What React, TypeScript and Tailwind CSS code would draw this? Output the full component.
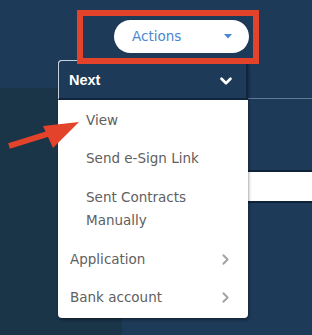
import { ChevronDown, ChevronRight } from "lucide-react";

const subItems = ["View", "Send e-Sign Link"];

export default function App() {
    return (
        <div className="relative h-[335px] w-[312px] overflow-hidden bg-[#1d3a59] font-['DejaVu_Sans',sans-serif]">
            <header className="flex h-[88px] justify-end pr-[63px] pt-[20px]">
                <button className="flex h-[33px] w-[135px] items-center justify-between rounded-full bg-white pl-[18px] pr-[17px] text-[13.5px] text-[#4a86d1]">
                    <span>Actions</span>
                    <svg width="8" height="5" viewBox="0 0 8 5">
                        <path d="M0 0 L8 0 L4 4.5 Z" fill="#4a86d1" />
                    </svg>
                </button>
            </header>

            <div className="flex h-[247px]">
                <aside className="w-[122px] bg-[#1a3448]" />
                <main className="flex-1 pt-[10px]">
                    <div className="h-px bg-[#5f7a95]" />
                    <div className="h-[71px]" />
                    <div className="h-[2px] bg-[#0e2239]" />
                    <div className="h-[29px] bg-white" />
                    <div className="h-[2px] bg-[#0e2239]" />
                </main>
            </div>

            {/* dropdown */}
            <div className="absolute left-[58px] top-[60px] w-[190px] overflow-hidden rounded-[4px] bg-white pb-[2px] shadow-[1px_2px_3px_rgba(0,0,0,0.35)]">
                <div className="flex h-[40px] items-center justify-between rounded-t-[4px] border-l border-t border-b-2 border-r-2 border-l-[#c9d1da] border-t-[#c9d1da] border-b-[#0f243d] border-r-[#0f243d] bg-[#1d3a59] pl-[10px] pr-[11px] pt-[3px]">
                    <span className="font-['Liberation_Sans',sans-serif] text-[14.5px] font-bold text-white">Next</span>
                    <ChevronDown className="h-[18px] w-[18px] text-white" strokeWidth={3.5} />
                </div>
                <div className="pt-[1px]">
                    {subItems.map((label) => (
                        <div key={label} className="flex h-[38px] items-center pl-[28px] text-[13.5px] text-[#606060]">
                            {label}
                        </div>
                    ))}
                    <div className="flex h-[63px] items-center pl-[28px] text-[13.5px] leading-[23px] text-[#606060]">
                        Sent Contracts<br />Manually
                    </div>
                    {["Application", "Bank account"].map((label) => (
                        <div key={label} className="flex h-[38px] items-center justify-between pl-[12px] pr-[14px] text-[13.5px] text-[#606060]">
                            <span>{label}</span>
                            <ChevronRight className="h-[17px] w-[17px] text-[#a3a3a3]" strokeWidth={2.75} />
                        </div>
                    ))}
                </div>
            </div>

            {/* annotation: red box */}
            <div className="absolute left-[77px] top-[10px] h-[54px] w-[182px] border-[6px] border-[#e3422b]" />

            {/* annotation: arrow */}
            <svg className="absolute left-0 top-0" width="312" height="335" viewBox="0 0 312 335">
                <line x1="9" y1="146" x2="54" y2="132" stroke="#e3422b" strokeWidth="6" />
                <polygon points="79,122 43,126 53,148" fill="#e3422b" />
            </svg>
        </div>
    );
}
